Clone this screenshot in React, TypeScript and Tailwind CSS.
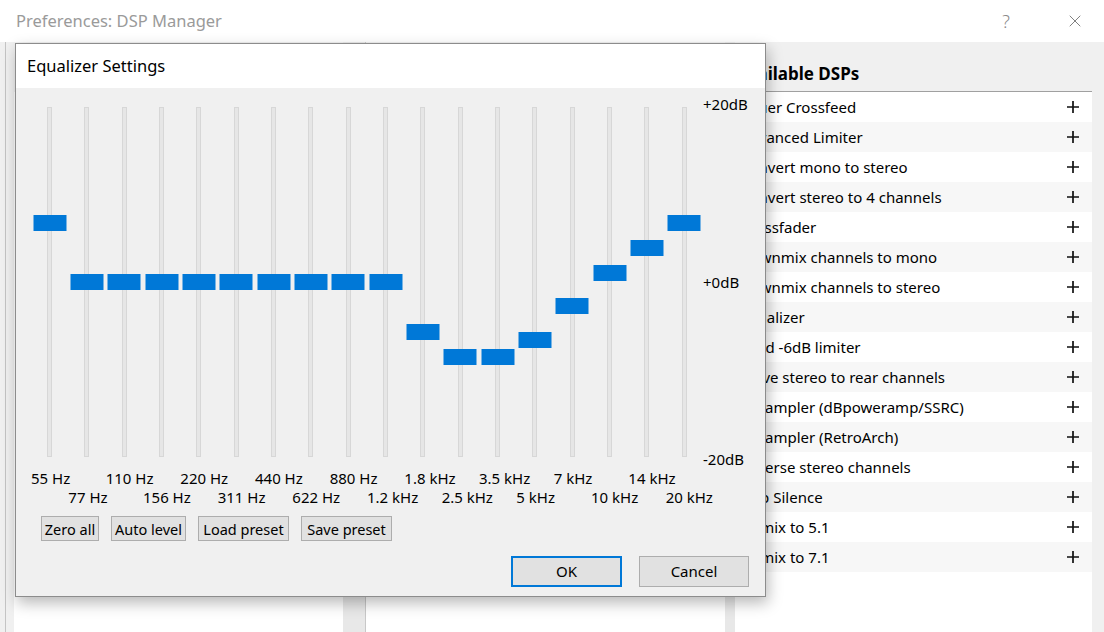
import { X } from 'lucide-react';

// thumb offsets are measured from the top of each 350px track
const bands = [
  { label: '55 Hz', top: 108 },
  { label: '77 Hz', top: 167 },
  { label: '110 Hz', top: 167 },
  { label: '156 Hz', top: 167 },
  { label: '220 Hz', top: 167 },
  { label: '311 Hz', top: 167 },
  { label: '440 Hz', top: 167 },
  { label: '622 Hz', top: 167 },
  { label: '880 Hz', top: 167 },
  { label: '1.2 kHz', top: 167 },
  { label: '1.8 kHz', top: 217 },
  { label: '2.5 kHz', top: 242 },
  { label: '3.5 kHz', top: 242 },
  { label: '5 kHz', top: 225 },
  { label: '7 kHz', top: 191 },
  { label: '10 kHz', top: 158 },
  { label: '14 kHz', top: 133 },
  { label: '20 kHz', top: 108 },
];

const dsps = [
  'Bauer Crossfeed',
  'Advanced Limiter',
  'Convert mono to stereo',
  'Convert stereo to 4 channels',
  'Crossfader',
  'Downmix channels to mono',
  'Downmix channels to stereo',
  'Equalizer',
  'Hard -6dB limiter',
  'Move stereo to rear channels',
  'Resampler (dBpoweramp/SSRC)',
  'Resampler (RetroArch)',
  'Reverse stereo channels',
  'Skip Silence',
  'Upmix to 5.1',
  'Upmix to 7.1',
];

function PlusIcon() {
  return (
    <svg width="12" height="12" viewBox="0 0 12 12" className="shrink-0">
      <path d="M6 0v12M0 6h12" stroke="#111" strokeWidth="1.7" />
    </svg>
  );
}

function EqualizerDialog() {
  return (
    <div className="absolute left-[15px] top-[43px] w-[751px] h-[554px] border border-[#8c8c8c] bg-[#f0f0f0] shadow-[2px_6px_14px_rgba(0,0,0,0.28)] flex flex-col">
      <div className="h-[44px] shrink-0 bg-white flex items-center pl-[11px] text-[16.5px] leading-[22px] text-black">
        Equalizer Settings
      </div>

      <div className="flex flex-col pt-[6px]">
        {/* sliders + dB scale */}
        <div className="flex items-start pl-[15px]">
          <div className="grid grid-cols-[repeat(18,minmax(0,1fr))] w-[672px] h-[350px] mt-[13px]">
            {bands.map((b) => (
              <div key={b.label} className="relative flex justify-center h-full">
                <div className="w-[5px] h-full bg-[#e6e6e6] border border-[#d7d7d7]" />
                <div
                  className="absolute left-1/2 -translate-x-1/2 w-[33px] h-[16px] bg-[#0078d7]"
                  style={{ top: b.top }}
                />
              </div>
            ))}
          </div>
          <div className="h-[375px] flex flex-col justify-between text-[15px] leading-[20px]">
            <span>+20dB</span>
            <span>+0dB</span>
            <span>-20dB</span>
          </div>
        </div>

        {/* frequency labels, staggered over two rows */}
        <div className="pl-[15px] text-[15px] leading-[19px]">
          <div className="grid grid-cols-[repeat(18,minmax(0,1fr))] w-[672px]">
            {bands.map((b, i) => (
              <div key={b.label} className="whitespace-nowrap h-[19px]">
                {i % 2 === 0 ? b.label : ''}
              </div>
            ))}
          </div>
          <div className="grid grid-cols-[repeat(18,minmax(0,1fr))] w-[672px]">
            {bands.map((b, i) => (
              <div key={b.label} className="whitespace-nowrap h-[19px]">
                {i % 2 === 1 ? b.label : ''}
              </div>
            ))}
          </div>
        </div>

        <div className="flex gap-[12px] pl-[25px] mt-[9px] text-[14.5px]">
          <button className="w-[58px] h-[25px] px-0 whitespace-nowrap border border-[#adadad] bg-[#e1e1e1] leading-[22px]">Zero all</button>
          <button className="w-[75px] h-[25px] px-0 whitespace-nowrap border border-[#adadad] bg-[#e1e1e1] leading-[22px]">Auto level</button>
          <button className="w-[91px] h-[25px] px-0 whitespace-nowrap border border-[#adadad] bg-[#e1e1e1] leading-[22px]">Load preset</button>
          <button className="w-[91px] h-[25px] px-0 whitespace-nowrap border border-[#adadad] bg-[#e1e1e1] leading-[22px]">Save preset</button>
        </div>

        <div className="flex justify-end gap-[17px] pr-[16px] mt-[15px] text-[15px]">
          <button className="w-[111px] h-[31px] border-2 border-[#0078d7] bg-[#e1e1e1]">OK</button>
          <button className="w-[110px] h-[31px] border border-[#adadad] bg-[#e1e1e1]">Cancel</button>
        </div>
      </div>
    </div>
  );
}

export default function App() {
  return (
    <div className="relative w-[1104px] h-[632px] overflow-hidden bg-[#f0f0f0] text-black font-['Noto_Sans','Open_Sans',sans-serif]">
      {/* window title bar */}
      <div className="h-[42px] bg-white flex items-center pl-[16px] pr-[19px]">
        <span className="text-[16.5px] text-[#9a9a9a] leading-[24px]">Preferences: DSP Manager</span>
        <div className="ml-auto flex items-center gap-[55px]">
          <span className="text-[18px] font-light text-[#8a8a8a] leading-[24px]">?</span>
          <X size={20} strokeWidth={1} className="text-[#666]" />
        </div>
      </div>

      {/* window body */}
      <div className="flex h-[590px]">
        <div className="w-[9px] ml-[5px] border-l border-[#c4c4c4] shrink-0" />
        <div className="w-[329px] shrink-0 flex flex-col">
          <div className="h-[50px] shrink-0" />
          <div className="flex-1 bg-white" />
        </div>
        <div className="w-[22px] shrink-0 bg-[#e8e8e8]" />
        <div className="w-[360px] shrink-0 flex flex-col border-l border-[#c8c8c8]">
          <div className="h-[50px] shrink-0" />
          <div className="flex-1 bg-white" />
        </div>
        <div className="w-[10px] shrink-0 bg-[#e8e8e8]" />

        {/* available DSPs list */}
        <div className="w-[357px] shrink-0 flex flex-col">
          <div className="h-[50px] shrink-0 border-b border-[#a0a0a0] pt-[21px] pl-[1px] text-[17px] font-bold leading-[22px]">
            Available DSPs
          </div>
          <div className="flex-1 bg-white">
            {dsps.map((name, i) => (
              <div
                key={name}
                className={`h-[30px] flex items-center justify-between pl-[5px] pr-[13px] text-[15px] ${i % 2 === 1 ? 'bg-[#f7f7f7]' : 'bg-white'}`}
              >
                <span>{name}</span>
                <PlusIcon />
              </div>
            ))}
          </div>
        </div>
        <div className="flex-1" />
      </div>

      <EqualizerDialog />
    </div>
  );
}
